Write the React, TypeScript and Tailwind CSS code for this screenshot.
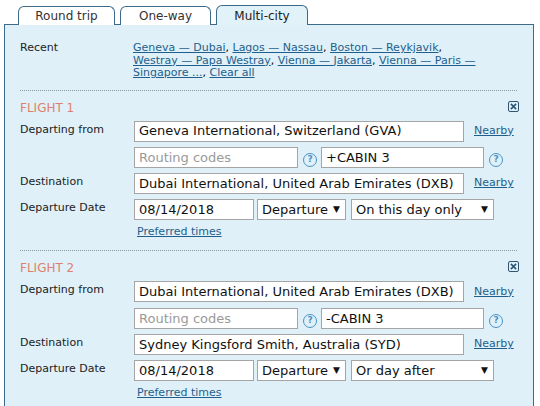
const font = { fontFamily: '"DejaVu Sans", Verdana, sans-serif' };

function Help() {
  return (
    <span className="inline-flex h-[14px] w-[14px] items-center justify-center rounded-full border border-[#4a93c6] text-[9px] font-bold leading-none text-[#4a93c6]">
      ?
    </span>
  );
}

function CloseBox() {
  return (
    <span className="flex h-[11px] w-[11px] items-center justify-center rounded-[2px] border border-[#2e5470]">
      <svg viewBox="0 0 8 8" className="h-[7px] w-[7px]">
        <path d="M1 1 L7 7 M7 1 L1 7" stroke="#2e5470" strokeWidth="1.8" />
      </svg>
    </span>
  );
}

function Field({ w, value, placeholder }: { w: string; value?: string; placeholder?: string }) {
  return (
    <div className={`${w} flex h-[21px] items-center border border-[#a5a5a5] bg-white px-[4px] text-[13px] ${value ? 'text-[#111]' : 'text-[#9a9a9a]'}`}>
      {value ?? placeholder}
    </div>
  );
}

function Select({ w, value }: { w: string; value: string }) {
  return (
    <div className={`${w} flex h-[21px] items-center justify-between border border-[#a5a5a5] bg-white pl-[4px] pr-[5px] text-[13px] text-[#111]`}>
      <span>{value}</span>
      <span className="text-[9px]">▼</span>
    </div>
  );
}

function Link({ children }: { children: React.ReactNode }) {
  return <span className="text-[#1e5f8c] underline">{children}</span>;
}

function Row({ label, children }: { label: string; children: React.ReactNode }) {
  return (
    <div className="flex h-[21px] items-center">
      <div className="w-[114px] pb-[3px] text-[11px] leading-[14px] text-[#222]">{label}</div>
      {children}
    </div>
  );
}

function Flight({ n, from, to, cabin, window }: { n: number; from: string; to: string; cabin: string; window: string }) {
  return (
    <div className="pt-[10px]">
      <div className="flex h-[14px] items-center justify-between pr-[12px]">
        <span className="text-[12px] leading-[14px] text-[#e0806c]">FLIGHT {n}</span>
        <span className="-mt-[3px]"><CloseBox /></span>
      </div>
      <div className="mt-[6px] flex flex-col gap-[5.33px]">
        <Row label="Departing from">
          <Field w="w-[330px]" value={from} />
          <span className="ml-[10px] text-[11px]"><Link>Nearby</Link></span>
        </Row>
        <Row label="">
          <Field w="w-[164px]" placeholder="Routing codes" />
          <span className="ml-[5px] mr-[4px]"><Help /></span>
          <Field w="w-[163px]" value={cabin} />
          <span className="ml-[5px]"><Help /></span>
        </Row>
        <Row label="Destination">
          <Field w="w-[330px]" value={to} />
          <span className="ml-[10px] text-[11px]"><Link>Nearby</Link></span>
        </Row>
        <Row label="Departure Date">
          <Field w="w-[120px]" value="08/14/2018" />
          <div className="ml-[3px]"><Select w="w-[89px]" value="Departure" /></div>
          <div className="ml-[5px]"><Select w="w-[143px]" value={window} /></div>
        </Row>
      </div>
      <div className="ml-[117px] mt-[5px] text-[11px] leading-[13px]"><Link>Preferred times</Link></div>
    </div>
  );
}

export default function App() {
  return (
    <div className="h-[406px] w-[540px] overflow-hidden bg-white pl-[4px] pt-[5px]" style={font}>
      <div className="relative z-10 -mb-px ml-[14px] flex items-end gap-[5px] text-[12px] text-[#333]">
        <div className="flex h-[19px] w-[97px] items-center justify-center rounded-t-[6px] border border-b-0 border-[#3c6a8a] bg-white">Round trip</div>
        <div className="flex h-[19px] w-[91px] items-center justify-center rounded-t-[6px] border border-b-0 border-[#3c6a8a] bg-white">One-way</div>
        <div className="flex h-[20px] w-[92px] items-center justify-center rounded-t-[6px] border border-b-0 border-[#3c6a8a] bg-[#e2f2f9] text-[#222]">Multi-city</div>
      </div>
      <div className="h-[400px] w-[530px] border border-[#3c6a8a] bg-[#dff0f8] pl-[15px] pr-[2px] pt-[17px]">
        <div className="flex text-[11px] leading-[12.5px]">
          <div className="w-[113px] text-[#222]">Recent</div>
          <div className="w-[350px]">
            <Link>Geneva — Dubai</Link>, <Link>Lagos — Nassau</Link>, <Link>Boston — Reykjavik</Link>,{' '}
            <Link>Westray — Papa Westray</Link>, <Link>Vienna — Jakarta</Link>, <Link>Vienna — Paris — Singapore ...</Link>, <Link>Clear all</Link>
          </div>
        </div>
        <div className="mr-[14px] mt-[10px] border-t border-dotted border-[#8a9aa5]" />
        <Flight n={1} from="Geneva International, Switzerland (GVA)" to="Dubai International, United Arab Emirates (DXB)" cabin="+CABIN 3" window="On this day only" />
        <div className="mr-[14px] mt-[12px] border-t border-dotted border-[#8a9aa5]" />
        <Flight n={2} from="Dubai International, United Arab Emirates (DXB)" to="Sydney Kingsford Smith, Australia (SYD)" cabin="-CABIN 3" window="Or day after" />
      </div>
    </div>
  );
}
